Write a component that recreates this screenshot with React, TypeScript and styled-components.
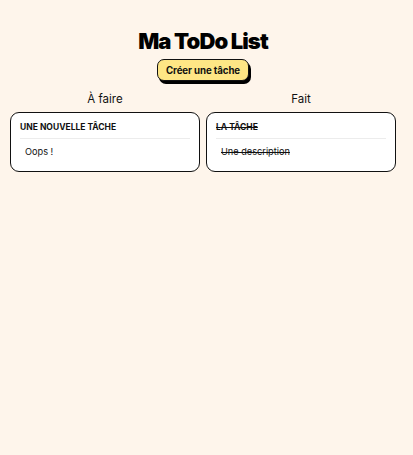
import React from "react";
import styled, { createGlobalStyle } from "styled-components";

const Global = createGlobalStyle`
  html, body { margin: 0; padding: 0; background: #fef5eb; }
  body { font-family: Inter, "Noto Sans", sans-serif; color: #111; }
`;

const Page = styled.div`
  display: flex;
  flex-direction: column;
  align-items: center;
  padding: 28px 17px 0 10px;
`;

const Title = styled.h1`
  margin: 0;
  font-family: Inter, sans-serif;
  font-weight: 900;
  font-size: 22px;
  line-height: 26px;
  letter-spacing: -0.9px;
  color: #000;
`;

const CreateButton = styled.button`
  margin-top: 5px;
  height: 22px;
  padding: 0 8px;
  background: #fee685;
  border: 1.5px solid #111;
  border-radius: 7px;
  box-shadow: 2px 3px 0 #000;
  font-family: Inter, sans-serif;
  font-weight: 700;
  font-size: 9.7px;
  letter-spacing: -0.1px;
  color: #111;
`;

const Columns = styled.div`
  align-self: stretch;
  display: grid;
  grid-template-columns: 1fr 1fr;
  gap: 6px;
  margin-top: 10px;
`;

const Column = styled.section`
  display: flex;
  flex-direction: column;
  align-items: stretch;
`;

const ColumnTitle = styled.h2`
  margin: 0 0 5px;
  text-align: center;
  font-family: Inter, sans-serif;
  font-weight: 400;
  font-size: 11.5px;
  line-height: 16px;
  color: #111;
`;

const Card = styled.div`
  background: #fff;
  border: 1.5px solid #111;
  border-radius: 9px;
  padding: 9px 9px 13px 9px;
`;

const CardTitle = styled.div<{ $done?: boolean }>`
  font-family: Inter, sans-serif;
  font-weight: 700;
  font-size: 8.5px;
  line-height: 11px;
  text-transform: uppercase;
  padding-bottom: 5px;
  border-bottom: 1px solid #ececec;
  text-decoration: ${(p) => (p.$done ? "line-through" : "none")};
`;

const CardText = styled.div<{ $done?: boolean }>`
  font-family: Inter, sans-serif;
  font-size: 9.2px;
  line-height: 13px;
  padding: 6px 0 0 5px;
  text-decoration: ${(p) => (p.$done ? "line-through" : "none")};
`;

const columns = [
  { title: "À faire", done: false, tasks: [{ name: "Une nouvelle tâche", desc: "Oops !" }] },
  { title: "Fait", done: true, tasks: [{ name: "La tâche", desc: "Une description" }] },
];

export default function App() {
  return (
    <>
      <Global />
      <Page>
        <Title>Ma ToDo List</Title>
        <CreateButton>Créer une tâche</CreateButton>
        <Columns>
          {columns.map((c) => (
            <Column key={c.title}>
              <ColumnTitle>{c.title}</ColumnTitle>
              {c.tasks.map((t) => (
                <Card key={t.name}>
                  <CardTitle $done={c.done}>{t.name}</CardTitle>
                  <CardText $done={c.done}>{t.desc}</CardText>
                </Card>
              ))}
            </Column>
          ))}
        </Columns>
      </Page>
    </>
  );
}
